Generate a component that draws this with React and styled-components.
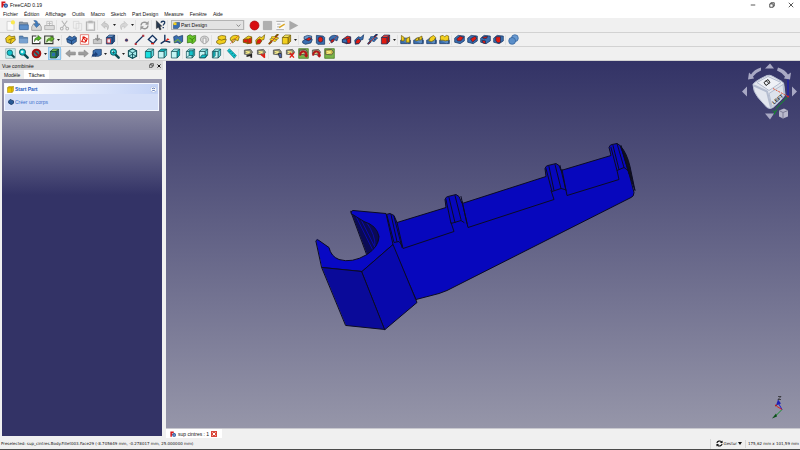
import React from 'react'
import styled, { createGlobalStyle, css } from 'styled-components'

//=============//
// GlobalStyle //
//=============//
const GlobalStyle = createGlobalStyle`
  * { box-sizing: border-box; }
  body {
    margin: 0;
    font-family: "Liberation Sans", Arial, sans-serif;
    font-size: 5px;
    line-height: 8px;
    color: #111;
    background: #f0f0f0;
  }
  button, select {
    font: inherit;
    color: inherit;
    margin: 0;
    padding: 0;
    border: 0;
    background: none;
  }
  svg { display: block; flex: none; }
`

//=======//
// Icons //
//=======//
const CYAN = '#12c4cc'
const TEAL = '#0a4a52'
const NAVY = '#12305c'
const BLUE = '#3a6fb0'
const RED = '#e01b10'
const YELLOW = '#f2cf1d'
const OLIVE = '#6d5a08'
const GREY = '#b4b4b4'

const Svg = ({ size = 11, children }) => (
  <svg width={size} height={size} viewBox="0 0 16 16" fill="none" aria-hidden="true">
    {children}
  </svg>
)

const Box = ({ top, front, side, line }) => (
  <g stroke={line} strokeLinejoin="round">
    <path d="M2 5l4-3.500h8l-3.500 3.500z" fill={top} />
    <path d="M2 5h8.500v9.500H2z" fill={front} />
    <path d="M10.500 5L14 1.500v9l-3.500 4z" fill={side} />
  </g>
)

const ViewBoxIcon = ({ face }) => (
  <Svg>
    <Box
      line={TEAL}
      top={face === 'top' ? '#0fb3bd' : '#a6f0f0'}
      front={face === 'front' ? '#19dede' : '#c4f4f4'}
      side={face === 'side' ? '#0fb3bd' : '#5fd9dc'}
    />
    {face === 'back' && <path d="M6 4h6v7H6zM2 14l4-3" fill={CYAN} stroke={TEAL} />}
    {face === 'bottom' && <path d="M3 14l3-4h7l-3 4z" fill={CYAN} stroke={TEAL} />}
    {face === 'left' && <path d="M3 6l3-2v7l-3 3z" fill={CYAN} stroke={TEAL} />}
  </Svg>
)

const Lens = ({ children }) => (
  <Svg>
    <path d="M9.500 9.500L14 14" stroke={TEAL} strokeWidth="3.500" strokeLinecap="round" />
    <circle cx="6.500" cy="6" r="4.500" fill={CYAN} stroke={TEAL} strokeWidth="1.200" />
    <circle cx="6" cy="5.500" r="2" fill="#d9fbfb" />
    {children}
  </Svg>
)

const Measure = ({ mark, frame }) => (
  <Svg>
    {frame && <path d="M1 1h14v14H1z" fill="#7ab54a" stroke="#3d7018" />}
    <path d="M2 3l9-1 3 4-3 4-9-1z" fill={mark === 'eye' ? '#c9b94a' : '#8c8c72'} stroke="#444" />
    <path d="M4 5l6 1M4 8l5-1" stroke="#fff38a" strokeWidth="1.500" />
    {mark === 'cross' && <path d="M7 7l6 7M13 7l-6 7" stroke={RED} strokeWidth="2" />}
    {mark === 'arc' && <path d="M3 11c1-8 9-8 10 1M10 10l3 3" stroke="#b3151a" strokeWidth="3" />}
    {mark === 'angle' && <path d="M7 9l6 5M12 8v6" stroke={RED} strokeWidth="2.500" />}
    {mark === 'line' && <path d="M5 12l7-2v4" stroke="#222" strokeWidth="2.500" />}
    {mark === 'dim' && <path d="M9 8h5v6h-3z" fill="#4c66a8" stroke="#222" />}
  </Svg>
)

// additive tools are yellow, subtractive ones are blue
const tones = {
  add: { main: YELLOW, line: OLIVE },
  sub: { main: BLUE, line: NAVY },
}

const Solid = ({ tone, kind }) => {
  const { main, line } = tones[tone]
  return (
    <Svg>
      {kind === 'pad' && (
        <g stroke={line} strokeLinejoin="round">
          <path d="M1 10l5-3 9 1-2 5-8 2-4-2z" fill={main} />
          <path d="M3 4l5-2 6 1v4l-6 2-5-2z" fill={tone === 'add' ? main : '#6e9bd1'} />
          {tone === 'sub' && <path d="M5 8l5-3 4 1-4 4z" fill={RED} />}
        </g>
      )}
      {kind === 'revolve' && (
        <g stroke={line}>
          <path d="M2 6c3-5 9-5 13-2l-2 6-4-2-3 4-4-3z" fill={main} />
          <path d="M4 9l4-2 1 3-4 3z" fill={tone === 'add' ? '#fff07a' : RED} />
          <path d="M2 14L14 2" stroke={RED} strokeDasharray="2 1" />
        </g>
      )}
      {kind === 'hole' && (
        <g stroke={line}>
          <path d="M2 2l10 1 2 2v10H4l-2-2z" fill={main} />
          <ellipse cx="8" cy="8" rx="3.500" ry="4" fill={RED} />
        </g>
      )}
      {kind === 'loft' && (
        <g stroke={line}>
          <path d="M2 8l7-5 5 1v9l-6 1-6-2z" fill={tone === 'add' ? main : RED} />
          <path d="M8 8l6-3v8l-6 1z" fill={RED} />
          <path d="M2 8l6-1 1 6-7-1z" fill={tone === 'add' ? RED : main} />
        </g>
      )}
      {kind === 'pipe' && (
        <g stroke={line}>
          <path d="M1 9l5-5 4 1 4-4-1 7-4 1-2 5-5 1z" fill={main} />
          <path d="M3 9l4-2 3 3-3 4-5 0z" fill={RED} />
        </g>
      )}
      {kind === 'helix' && (
        <g strokeLinecap="round">
          <path d="M2 14l3-3M4 8c4-2 5 4 7 1M6 5c4-2 5 4 8 1M11 4l3-3" stroke={line} strokeWidth="3" />
          <path d="M4 8c4-2 5 4 7 1M6 5c4-2 5 4 8 1" stroke={main} strokeWidth="2" />
          <path d="M2 14L14 2" stroke={RED} />
        </g>
      )}
      {kind === 'box' && (
        <Box
          top={tone === 'add' ? '#fff06a' : '#f0453a'}
          front={tone === 'add' ? main : RED}
          side={tone === 'add' ? '#c79f0c' : '#a80d08'}
          line={line}
        />
      )}
    </Svg>
  )
}

const Pattern = ({ kind }) => (
  <Svg>
    <path d="M1 9h14v5H1z" fill={BLUE} stroke={NAVY} />
    <path d="M2 9l3-3h9v6l-2 2" fill="#5b8cc4" stroke={NAVY} />
    {kind === 'mirror' && <path d="M2 2l4 3v5H2zM14 4l-5 3v5h5z" fill={YELLOW} stroke={OLIVE} />}
    {kind === 'linear' && <path d="M4 7l4-2v4l-4 1zM9 5l4-2v5l-4 1z" fill={YELLOW} stroke={OLIVE} />}
    {kind === 'polar' && <path d="M4 10l2-5 5-3 3 3-2 4-4 2z" fill={YELLOW} stroke={OLIVE} />}
    {kind === 'multi' && <path d="M2 3l4-1 2 2 3-2 3 1v6l-5 1-3-1-4 0z" fill={YELLOW} stroke={OLIVE} />}
  </Svg>
)

const Dress = ({ kind }) => (
  <Svg>
    <g stroke={NAVY} strokeLinejoin="round">
      <path d="M1 6l5-4 9 1v7l-6 4-8-2z" fill={BLUE} />
      {kind === 'fillet' && <path d="M4 7l5-4 5 2-4 5H5z" fill={RED} />}
      {kind === 'chamfer' && <path d="M5 7l7-4 2 4-6 5z" fill={RED} />}
      {kind === 'draft' && <path d="M3 5l8-2-1 3-4 1zM3 9l5 1v4l-4-1z" fill={RED} />}
      {kind === 'thickness' && <path d="M4 4h7v8l-4 1-3-3z" fill={RED} />}
    </g>
  </Svg>
)

const icons = {
  new: (
    <Svg>
      <path d="M3 2h10v13H3z" fill="#fafafa" stroke="#c8c8c8" />
      <circle cx="11.500" cy="3.500" r="3" fill="#fbe94e" />
    </Svg>
  ),
  open: (
    <Svg>
      <path d="M2 3h5l1 1h6v9H2z" fill="#8f9ba8" stroke="#5f6d7c" />
      <path d="M2 7h13v7H2z" fill="#5c8fca" stroke="#34659f" />
    </Svg>
  ),
  save: (
    <Svg>
      <path d="M1 10l3-5h8l3 5v5H1z" fill="#d6d6d6" stroke="#8a8a8a" />
      <path d="M4 1c4-1 6 1 6 5h3l-5 5-4-5h3c0-2-1-4-3-5z" fill="#3f7dc0" stroke="#27548a" strokeWidth=".7" />
    </Svg>
  ),
  print: (
    <Svg>
      <path d="M4 2h8v6H4z" fill="#f3f3f3" stroke={GREY} />
      <path d="M1 8h14v6H1z" fill="#dcdcdc" stroke="#a2a2a2" />
      <path d="M5 5h6M8 3v5" stroke="#aaa" />
    </Svg>
  ),
  cut: (
    <Svg>
      <path d="M4 1l7 10M12 1L5 11" stroke={GREY} strokeWidth="1.500" />
      <circle cx="4" cy="12.500" r="2" stroke={GREY} strokeWidth="1.500" />
      <circle cx="12" cy="12.500" r="2" stroke={GREY} strokeWidth="1.500" />
    </Svg>
  ),
  copy: (
    <Svg>
      <path d="M2 2h8v10H2zM6 5h8v10H6z" fill="#f0f0f0" stroke="#d4d4d4" />
    </Svg>
  ),
  paste: (
    <Svg>
      <path d="M2 3h12v12H2z" fill="#dedede" stroke="#b0b0b0" strokeWidth="1.500" />
      <path d="M5 6h7v7H5z" fill="#f6f6f6" />
      <path d="M5 1h6v3H5z" fill={GREY} />
    </Svg>
  ),
  undo: <Svg><path d="M2 7l5-5v3c5 0 7 4 4 9 0-4-1-5-4-5v3z" fill="#cfcfcf" stroke={GREY} /></Svg>,
  redo: <Svg><path d="M14 7L9 2v3c-5 0-7 4-4 9 0-4 1-5 4-5v3z" fill="#d6d6d6" stroke="#c0c0c0" /></Svg>,
  refresh: (
    <Svg>
      <path d="M3 8c0-5 6-6 9-3M13 8c0 5-6 6-9 3" stroke="#979797" strokeWidth="2" />
      <path d="M14 1v6H9zM2 15V9h5z" fill="#979797" />
    </Svg>
  ),
  help: (
    <Svg>
      <path d="M2 1l8 8-3 .500 2 4-2 1-2-4-3 2z" fill="#26384f" stroke="#111" strokeWidth=".6" />
      <path d="M9 4c0-3 6-3 5 0 0 2-2 2-2 4M12 10v2" stroke="#1f3c63" strokeWidth="2" />
    </Svg>
  ),
  record: <Svg><circle cx="8" cy="8" r="6.500" fill="#d80d12" stroke="#a5080c" /></Svg>,
  stop: <Svg><path d="M2 2h12v12H2z" fill="#b0b0b0" stroke="#a0a0a0" /></Svg>,
  edit: (
    <Svg>
      <path d="M2 2h12v12H2z" fill="#fafafa" />
      <path d="M2 2h12M3 6h5M3 10h4M2 14h11" stroke="#8a8a8a" />
      <path d="M6 11l8-5" stroke="#d9a520" strokeWidth="2" />
    </Svg>
  ),
  play: <Svg><path d="M2 1l13 7-13 7z" fill="#a9a9a9" /></Svg>,
  part: (
    <Svg>
      <path d="M1 6l5-4 4 2 4-1 1 6-6 5-7-2z" fill={YELLOW} stroke={OLIVE} />
      <path d="M5 9l4-2 5-1M9 7L8 13" stroke={OLIVE} />
    </Svg>
  ),
  group: (
    <Svg>
      <path d="M2 3h5l1 2h6v8H2z" fill="#5e87b8" stroke="#3c638f" />
      <path d="M2 7h12v6H2z" fill="#79a2d0" />
    </Svg>
  ),
  link: (
    <Svg>
      <path d="M8 3H2v11h11v-3" fill="#fff" stroke="#333" strokeWidth="1.500" />
      <path d="M5 11c0-5 2-6 5-6V2l5 4-5 4V8c-2 0-4 0-5 3z" fill="#54b722" stroke="#1f5707" strokeWidth=".8" />
    </Svg>
  ),
  linkGroup: (
    <Svg>
      <path d="M1 3h12v11H1z" fill="#e4f3d4" stroke="#333" strokeWidth="1.500" />
      <path d="M4 12c0-5 2-6 6-6V3l5 4-5 4V9c-3 0-5 0-6 3z" fill="#68b52c" stroke="#1f5707" strokeWidth=".8" />
    </Svg>
  ),
  body: (
    <Svg>
      <path d="M1 7l4-4 4 2 3-2 3 2v6l-6 4-7-3z" fill={BLUE} stroke={NAVY} />
      <path d="M1 7l7 3 7-4M8 10v5" stroke={NAVY} />
    </Svg>
  ),
  sketch: (
    <Svg>
      <path d="M2 1h12v14H2z" fill="#fff" stroke="#db5248" />
      <path d="M4 11l3-7 5 3-3 5zM5 4l6 7" stroke={RED} strokeWidth="1.500" />
    </Svg>
  ),
  mapSketch: (
    <Svg>
      <path d="M2 8h12v6H2z" fill="#c9c9c9" stroke="#8d8d8d" />
      <path d="M8 1v8M5 6l3 3 3-3" stroke="#8d8d8d" strokeWidth="2" />
    </Svg>
  ),
  attach: (
    <Svg>
      <Box top="#6c99cf" front={BLUE} side="#23508c" line={NAVY} />
      <path d="M3 7h5v6H3z" fill="#e8e8f5" stroke={RED} />
    </Svg>
  ),
  point: <Svg><circle cx="8" cy="9" r="2" fill="#27407c" stroke="#a51b1b" strokeWidth=".5" /></Svg>,
  line: (
    <Svg>
      <path d="M2 14L14 2" stroke={NAVY} strokeWidth="2" />
      <path d="M1 13h3v3H1zM12 1h3v3h-3z" fill="#b3303a" />
    </Svg>
  ),
  plane: (
    <Svg>
      <path d="M8 2l6 6-5 6-7-6z" fill="#eef3fb" stroke={NAVY} strokeWidth="2" />
      <path d="M6 13h4v2H6z" fill={RED} />
    </Svg>
  ),
  axes: (
    <Svg>
      <path d="M7 1v9l-6 4M7 10l8 2" stroke={NAVY} strokeWidth="2" />
      <path d="M11 6l3 2-7 3z" fill={RED} />
    </Svg>
  ),
  shapeBinder: (
    <Svg>
      <path d="M1 4l4-2 3 2 6-2v9l-4 3-4-2-4 1z" fill={BLUE} stroke={NAVY} />
      <path d="M2 12l5-4 5 5" stroke="#6fae3a" strokeWidth="1.500" />
    </Svg>
  ),
  subBinder: (
    <Svg>
      <path d="M2 3l4-2 3 2 5-1v8l-4 4-4-2-4 1z" fill="#69c52a" stroke="#2c6b0b" />
      <path d="M5 6l4 2 4-3M9 8v4" stroke="#2c6b0b" />
    </Svg>
  ),
  clone: (
    <Svg>
      <path d="M2 9c-1-8 13-8 12 0l-2 3H4z" fill="#d5d5d5" stroke="#949494" />
      <path d="M6 6h4v8H6z" fill="#f4f4f4" stroke="#949494" />
    </Svg>
  ),
  fitAll: (
    <Svg>
      <path d="M1 1h14v14H1z" fill="#c6f0f0" stroke="#8fa5a8" />
      <path d="M9 9l5 5" stroke={TEAL} strokeWidth="3" />
      <circle cx="7" cy="7" r="4" fill={CYAN} stroke={TEAL} />
    </Svg>
  ),
  fitSelection: <Lens />,
  drawStyle: (
    <Svg>
      <circle cx="8" cy="8" r="5.500" fill="#2e7d88" stroke="#a51212" strokeWidth="3" />
      <path d="M4 4l8 8" stroke="#a51212" strokeWidth="2.500" />
    </Svg>
  ),
  selBox: (
    <Svg>
      <Box top="#7cc252" front="#2f8f4a" side="#1c5a6a" line="#12402a" />
      <path d="M4 7h5v5H4z" fill="#2b6dad" />
    </Svg>
  ),
  back: <Svg><path d="M1 8l6-5v3h8v4H7v3z" fill="#9c9c9c" stroke="#888" /></Svg>,
  forward: <Svg><path d="M15 8L9 3v3H1v4h8v3z" fill="#9c9c9c" stroke="#888" /></Svg>,
  linkNav: (
    <Svg>
      <path d="M3 4l4-2h8v8l-4 2H3z" fill={BLUE} stroke={NAVY} />
      <path d="M1 14c0-5 2-6 5-6V5l4 4-4 4v-2c-2 0-4 1-5 3z" fill="#1c3f78" />
    </Svg>
  ),
  zoom: <Lens><path d="M6.500 4v5M4 6.500h5" stroke={TEAL} /></Lens>,
  iso: (
    <Svg>
      <path d="M8 1l6 3v8l-6 3-6-3V4z" fill="#a6ecec" stroke={TEAL} strokeWidth="1.500" />
      <path d="M2 4l6 3 6-3M8 7v8M2 12l6-3 6 3" stroke={TEAL} strokeWidth="1.200" />
    </Svg>
  ),
  ruler: (
    <Svg>
      <path d="M2 4l3-3 10 10-3 4z" fill={CYAN} stroke="#0b7f8b" />
      <path d="M5 6l2-2M8 9l2-2M11 12l2-2" stroke={TEAL} />
    </Svg>
  ),
  boolean: (
    <Svg>
      <circle cx="10" cy="6" r="5" fill="#6a9bd1" stroke="#2e5f99" />
      <circle cx="6" cy="10" r="5" fill="#5b8fc9" stroke="#2e5f99" />
    </Svg>
  ),
  task: (
    <Svg size={7}>
      <path d="M1 4l3-3h11v10l-3 4H1z" fill="#ecc500" stroke="#8f7600" />
      <path d="M1 4h10v10M11 4l4-3" stroke="#8f7600" />
    </Svg>
  ),
}

const Logo = ({ size = 7 }) => (
  <Svg size={size}>
    <path d="M1 1h9v4H5v2h4v3H5v5H1z" fill="#d3191c" />
    <circle cx="11" cy="10.500" r="3.500" stroke="#2c5fa8" strokeWidth="3" />
    <path d="M11 5v11M6 10.500h10" stroke="#2c5fa8" />
  </Svg>
)

//==========//
// TitleBar //
//==========//
const TitleBar = styled.header`
  display: flex;
  align-items: center;
  gap: 2px;
  height: 9px;
  padding-left: 1px;
  background: #fff;
`

const WindowButtons = styled.div`
  display: flex;
  margin-left: auto;
`

const WindowButton = styled.button`
  display: flex;
  align-items: center;
  justify-content: center;
  width: 19px;
  height: 9px;
`

const MenuBar = styled.nav`
  display: flex;
  gap: 6px;
  height: 9px;
  padding-left: 3px;
  background: #fff;
`

const MenuItem = styled.a`
  line-height: 10px;
  color: inherit;
  text-decoration: none;
  white-space: nowrap;
`

const menus = ['Fichier', 'Édition', 'Affichage', 'Outils', 'Macro', 'Sketch', 'Part Design', 'Measure', 'Fenêtre', 'Aide']

const Header = () => (
  <>
    <TitleBar>
      <Logo />
      <span>FreeCAD 0.19</span>
      <WindowButtons>
        <WindowButton aria-label="Réduire">
          <Svg size={6}><path d="M2 8h12" stroke="#222" strokeWidth="2" /></Svg>
        </WindowButton>
        <WindowButton aria-label="Restaurer">
          <Svg size={6}><path d="M2 5h9v9H2zM5 5V2h9v9h-3" stroke="#222" strokeWidth="2" /></Svg>
        </WindowButton>
        <WindowButton aria-label="Fermer">
          <Svg size={6}><path d="M2 2l12 12M14 2L2 14" stroke="#222" strokeWidth="2" /></Svg>
        </WindowButton>
      </WindowButtons>
    </TitleBar>
    <MenuBar>
      {menus.map(name => <MenuItem key={name} href="#">{name}</MenuItem>)}
    </MenuBar>
  </>
)

//==========//
// Toolbars //
//==========//
const Toolbar = styled.div`
  display: flex;
  align-items: center;
  height: ${p => (p.$tall ? 15 : 14)}px;
  padding-left: 4px;
  background: #f0f0f0;
  border-bottom: 1px solid #d2d2d2;
`

const ToolButton = styled.button`
  display: flex;
  align-items: center;
  justify-content: center;
  width: 13px;
  height: 13px;
  ${p => p.$active && css`
    background: #b9dcf3;
    box-shadow: inset 0 0 0 1px #8cc4ec;
  `}
`

const DropButton = styled.button`
  display: flex;
  align-items: center;
  justify-content: center;
  width: 5px;
  height: 13px;
`

const Separator = styled.span`
  width: ${p => p.$width}px;
  height: 10px;
  border-left: 1px solid #e2e2e2;
`

const Workbench = styled.label`
  display: flex;
  align-items: center;
  gap: 1px;
  width: 73px;
  height: 10px;
  padding: 0 2px 0 1px;
  background: #e3e3e3;
  border: 1px solid #b4b4b4;
`

const WorkbenchSelect = styled.select`
  flex: 1;
  min-width: 0;
  height: 8px;
  appearance: none;
`

const Tool = ({ icon, label, active }) => (
  <ToolButton aria-label={label} $active={active}>{icon}</ToolButton>
)

const Drop = ({ label }) => (
  <DropButton aria-label={label}>
    <svg width="3" height="2" viewBox="0 0 3 2" aria-hidden="true"><path d="M0 0h3L1.500 2z" fill="#222" /></svg>
  </DropButton>
)

const FileTools = () => (
  <Toolbar $tall role="toolbar">
    <Tool label="Nouveau" icon={icons.new} />
    <Tool label="Ouvrir" icon={icons.open} />
    <Tool label="Enregistrer" icon={icons.save} />
    <Tool label="Imprimer" icon={icons.print} />
    <Separator $width={2} />
    <Tool label="Couper" icon={icons.cut} />
    <Tool label="Copier" icon={icons.copy} />
    <Tool label="Coller" icon={icons.paste} />
    <Separator $width={2} />
    <Tool label="Annuler" icon={icons.undo} />
    <Drop label="Historique d'annulation" />
    <Tool label="Rétablir" icon={icons.redo} />
    <Drop label="Historique de rétablissement" />
    <Separator $width={3} />
    <Tool label="Rafraîchir" icon={icons.refresh} />
    <Separator $width={3} />
    <Tool label="Qu'est-ce que c'est ?" icon={icons.help} />
    <Separator $width={4} />
    <Workbench>
      <Svg size={7}>
        <path d="M1 5l4-4h10v9l-4 5H1z" fill={BLUE} stroke={NAVY} />
        <path d="M1 1h7v6H1z" fill={YELLOW} />
      </Svg>
      <WorkbenchSelect aria-label="Atelier">
        <option>Part Design</option>
      </WorkbenchSelect>
      <Svg size={5}><path d="M2 5l6 6 6-6" stroke="#555" strokeWidth="2" /></Svg>
    </Workbench>
    <Separator $width={4} />
    <Tool label="Enregistrer la macro" icon={icons.record} />
    <Tool label="Arrêter" icon={icons.stop} />
    <Tool label="Macros" icon={icons.edit} />
    <Tool label="Exécuter" icon={icons.play} />
  </Toolbar>
)

const PartTools = () => (
  <Toolbar role="toolbar">
    <Tool label="Créer une pièce" icon={icons.part} />
    <Tool label="Créer un groupe" icon={icons.group} />
    <Tool label="Créer un lien" icon={icons.link} />
    <Tool label="Lier un groupe" icon={icons.linkGroup} />
    <Drop label="Types de lien" />
    <Separator $width={4} />
    <Tool label="Corps" icon={icons.body} />
    <Tool label="Esquisse" icon={icons.sketch} />
    <Tool label="Éditer l'esquisse" icon={icons.mapSketch} />
    <Tool label="Appliquer l'esquisse" icon={icons.attach} />
    <Separator $width={3} />
    <Tool label="Point" icon={icons.point} />
    <Tool label="Ligne" icon={icons.line} />
    <Tool label="Plan" icon={icons.plane} />
    <Tool label="Repère" icon={icons.axes} />
    <Tool label="Forme liée" icon={icons.shapeBinder} />
    <Tool label="Sous-forme liée" icon={icons.subBinder} />
    <Tool label="Clone" icon={icons.clone} />
    <Separator $width={4} />
    <Tool label="Protrusion" icon={<Solid tone="add" kind="pad" />} />
    <Tool label="Révolution" icon={<Solid tone="add" kind="revolve" />} />
    <Tool label="Lissage additif" icon={<Solid tone="add" kind="loft" />} />
    <Tool label="Balayage additif" icon={<Solid tone="add" kind="pipe" />} />
    <Tool label="Hélice additive" icon={<Solid tone="add" kind="helix" />} />
    <Tool label="Primitive additive" icon={<Solid tone="add" kind="box" />} />
    <Drop label="Primitives additives" />
    <Separator $width={3} />
    <Tool label="Cavité" icon={<Solid tone="sub" kind="pad" />} />
    <Tool label="Perçage" icon={<Solid tone="sub" kind="hole" />} />
    <Tool label="Rainure" icon={<Solid tone="sub" kind="revolve" />} />
    <Tool label="Lissage soustractif" icon={<Solid tone="sub" kind="loft" />} />
    <Tool label="Balayage soustractif" icon={<Solid tone="sub" kind="pipe" />} />
    <Tool label="Hélice soustractive" icon={<Solid tone="sub" kind="helix" />} />
    <Tool label="Primitive soustractive" icon={<Solid tone="sub" kind="box" />} />
    <Drop label="Primitives soustractives" />
    <Separator $width={2} />
    <Tool label="Symétrie" icon={<Pattern kind="mirror" />} />
    <Tool label="Répétition linéaire" icon={<Pattern kind="linear" />} />
    <Tool label="Répétition circulaire" icon={<Pattern kind="polar" />} />
    <Tool label="Transformation multiple" icon={<Pattern kind="multi" />} />
    <Separator $width={2} />
    <Tool label="Congé" icon={<Dress kind="fillet" />} />
    <Tool label="Chanfrein" icon={<Dress kind="chamfer" />} />
    <Tool label="Dépouille" icon={<Dress kind="draft" />} />
    <Tool label="Coque" icon={<Dress kind="thickness" />} />
    <Separator $width={2} />
    <Tool label="Opération booléenne" icon={icons.boolean} />
  </Toolbar>
)

const ViewTools = () => (
  <Toolbar role="toolbar">
    <Tool label="Tout afficher" icon={icons.fitAll} />
    <Tool label="Afficher la sélection" icon={icons.fitSelection} />
    <Tool label="Style de tracé" icon={icons.drawStyle} />
    <Drop label="Styles de tracé" />
    <Tool label="Boîte de sélection" icon={icons.selBox} active />
    <Separator $width={3} />
    <Tool label="Précédent" icon={icons.back} />
    <Tool label="Suivant" icon={icons.forward} />
    <Tool label="Aller à l'objet lié" icon={icons.linkNav} />
    <Drop label="Navigation des liens" />
    <Tool label="Zoom" icon={icons.zoom} />
    <Drop label="Options de zoom" />
    <Tool label="Isométrique" icon={icons.iso} />
    <Separator $width={4} />
    <Tool label="Face" icon={<ViewBoxIcon face="front" />} />
    <Tool label="Dessus" icon={<ViewBoxIcon face="top" />} />
    <Tool label="Droite" icon={<ViewBoxIcon face="side" />} />
    <Separator $width={2} />
    <Tool label="Arrière" icon={<ViewBoxIcon face="back" />} />
    <Tool label="Dessous" icon={<ViewBoxIcon face="bottom" />} />
    <Tool label="Gauche" icon={<ViewBoxIcon face="left" />} />
    <Separator $width={2} />
    <Tool label="Mesurer une distance" icon={icons.ruler} />
    <Separator $width={4} />
    <Tool label="Mesure linéaire" icon={<Measure mark="line" />} />
    <Tool label="Mesure angulaire" icon={<Measure mark="angle" />} />
    <Separator $width={3} />
    <Tool label="Actualiser les mesures" icon={<Measure mark="dim" />} />
    <Tool label="Effacer les mesures" icon={<Measure mark="cross" />} />
    <Tool label="Afficher les mesures" icon={<Measure mark="arc" frame />} />
    <Tool label="Afficher en 3D" icon={<Measure mark="arc" />} />
    <Tool label="Afficher les écarts" icon={<Measure mark="eye" frame />} />
  </Toolbar>
)

//===========//
// SidePanel //
//===========//
const Panel = styled.aside`
  display: flex;
  flex-direction: column;
  flex: none;
  width: 163px;
`

const PanelTitle = styled.div`
  display: flex;
  align-items: center;
  gap: 2px;
  height: 9px;
  padding: 0 1px 0 2px;
  background: #dcdcdc;
`

const PanelButton = styled.button`
  display: flex;
  align-items: center;
  justify-content: center;
  width: 6px;
  height: 8px;
  &:first-of-type { margin-left: auto; }
`

const Tabs = styled.div`
  display: flex;
  align-items: flex-end;
  height: 9px;
`

const Tab = styled.button`
  height: ${p => (p.$active ? 9 : 8)}px;
  padding: 0 4px;
  background: ${p => (p.$active ? '#fff' : '#ececec')};
`

const TaskArea = styled.div`
  flex: 1;
  margin: 0 1px 2px 2px;
  padding: 4px 3px 4px 2px;
  background: linear-gradient(#9797ae, #8a8aa3 30px, #333366 116px);
`

const TaskBox = styled.section`
  border: 1px solid #f4f7ff;
  background: #d5dff8;
`

const TaskHeader = styled.div`
  display: flex;
  align-items: center;
  gap: 1px;
  height: 10px;
  padding: 0 1px 0 2px;
  font-weight: bold;
  color: #1f5cc0;
  background: linear-gradient(90deg, #fff, #c5d4f7);
`

const CollapseButton = styled.button`
  display: flex;
  margin-left: auto;
`

const TaskLink = styled.a`
  display: flex;
  align-items: center;
  gap: 1px;
  height: 16px;
  padding-left: 3px;
  color: #3a6fcb;
  text-decoration: none;
`

const SidePanel = () => (
  <Panel>
    <PanelTitle>
      <span>Vue combinée</span>
      <PanelButton aria-label="Détacher">
        <Svg size={5}><path d="M1 6h9v8H1zM5 6V2h9v8h-4" stroke="#222" strokeWidth="2" /></Svg>
      </PanelButton>
      <PanelButton aria-label="Fermer le panneau">
        <Svg size={4}><path d="M2 2l12 12M14 2L2 14" stroke="#111" strokeWidth="4" /></Svg>
      </PanelButton>
    </PanelTitle>
    <Tabs role="tablist">
      <Tab role="tab" aria-selected="false">Modèle</Tab>
      <Tab role="tab" aria-selected="true" $active>Tâches</Tab>
    </Tabs>
    <TaskArea>
      <TaskBox>
        <TaskHeader>
          {icons.task}
          <span>Start Part</span>
          <CollapseButton aria-label="Replier">
            <Svg size={7}>
              <circle cx="8" cy="8" r="7" fill="#fff" stroke="#9bb0dc" />
              <path d="M5 7l3-3 3 3M5 12l3-3 3 3" stroke="#23479b" strokeWidth="2" />
            </Svg>
          </CollapseButton>
        </TaskHeader>
        <TaskLink href="#">
          <Svg size={6}>
            <path d="M1 6l5-5 4 2 5 2v6l-6 4-7-4z" fill="#285a96" stroke="#12305c" strokeWidth="2" />
          </Svg>
          <span>Créer un corps</span>
        </TaskLink>
      </TaskBox>
    </TaskArea>
  </Panel>
)

//==========//
// Viewport //
//==========//
const Workspace = styled.main`
  display: flex;
  flex: 1;
  gap: 3px;
  min-height: 0;
`

const Document = styled.div`
  display: flex;
  flex-direction: column;
  flex: 1;
  min-width: 0;
`

const Viewport = styled.div`
  display: flex;
  flex: 1;
  min-height: 0;
  background: linear-gradient(#333366, #9696a9);
`

const Scene = styled.svg`
  width: 100%;
  height: 100%;
`

const Model = () => (
  <g stroke="#0b0b24" strokeWidth="1" strokeLinejoin="round" strokeLinecap="round">
    <path
      d="M386 214l4-1 4 2 3 7 49-15-1-8q1-3 3-3l8-2 3 2 3 7 84-27-1-8q1-3 3-3l8-2 3 2 2 5 50-15-2-8q1-3 3-3l5-1 3 2q7 16 8 24l6 23q0 4-3 5L447 290l-8 3-23 6-24-55z"
      fill="#0707bd"
    />
    <path d="M621 146q6 7 9 20l5 24-7-20z" fill="#111119" />
    <g fill="none">
      <path d="M397 222l6 26 51-17-3-9M462 201l6 26 86-28-3-9M562 169l5 26 52-16-2-9" />
      <path d="M446 199l5 24 10-3 3 2M449 197l6 25M455 195l6 24M461 196l6 27" />
      <path d="M546 168l6 23 9-3 4 1M549 166l5 24M555 164l6 24M560 165l6 25" />
      <path d="M611 147l6 23 7-3 4 3M613 145l6 24M617 143l7 24M621 145l8 28" />
      <path d="M387 215l7 27 5-1 3 4M391 214l6 27M394 216l8 31" />
    </g>
    <path d="M351 211l14 10q13 3 14 16-2 12-12 17z" fill="#0a0a55" />
    <path d="M356 216l17 34M361 219l14 28M366 221q10 14 9 25" fill="none" stroke="#0909a8" />
    <path
      d="M316 240q1-2 3 0l10 7q2 9 10 12 13 4 28-5 12-8 12-18-2-11-15-15l-13-8q0-3 2-3l33 3 7 31-31 27-40-4z"
      fill="#0808c4"
    />
    <path d="M322 267l40 4 23 58-39-4z" fill="#0a0a99" />
    <path d="M362 271l31-27 24 58-32 27z" fill="#0808ac" />
  </g>
)

const NavigationCube = () => (
  <g>
    <g fill="#a9a9c4">
      <path d="M765 68h9l-4-5zM765 113h9l-4 6zM747 86v10l-5-5zM792 86v10l5-5z" />
      <path d="M761 67q-7 2-10 7l-2-2-1 7 6-1-1-2q3-4 8-6zM778 67q7 2 10 7l3-2-1 7-6-1 1-2q-3-4-8-6z" />
      <path d="M779 110l5-2 4 2v6l-5 2-4-2z" fill="#b9b9cc" />
      <path d="M779 110l4 2 5-2M783 112v6" stroke="#7c7c96" fill="none" />
    </g>
    <path d="M753 84q1-3 14-9 3-1 6 1l9 5q2 1 2 4l1 9q0 2-12 13-3 2-6 0l-9-10q-5-6-5-13z" fill="#e3e6ee" stroke="#b8bfd2" />
    <path d="M754 85l13 6 4 16" fill="none" stroke="#b4bccf" strokeWidth="2" />
    <path d="M757 82l11-6 13 6-12 8z" fill="#eef0f6" stroke="#b4bccf" />
    <path d="M769 93l14-9 1 10-12 12z" fill="#dde2ec" stroke="#b4bccf" />
    <path d="M764 82l4-3 2 3-4 3zM766 80l3 3" fill="none" stroke="#222" strokeWidth="1" />
    <text x="774" y="104" fontSize="5" fontWeight="bold" fill="#222" transform="rotate(-40 774 104)">LEFT</text>
    <path d="M773 88l15 8" stroke="#e0593c" strokeDasharray="2 1" />
    <path d="M788 96V79" stroke="#1414c8" />
    <path d="M788 96l-12 12" stroke="#0c9c1e" strokeWidth="1" />
    <path d="M773 110l2 2 2-3M775 112l-1 2" stroke="#0c9c1e" fill="none" />
    <circle cx="788" cy="96" r="1" fill="#d42020" />
  </g>
)

const AxisCross = () => (
  <g fill="none">
    <path d="M782 409l-7 7" stroke="#15912b" strokeWidth="1" />
    <path d="M776 413l-4 5 5-2z" fill="#0b4f19" />
    <path d="M782 409l-4-7" stroke="#1d1dcc" strokeWidth="1" />
    <path d="M776 405l2-6 3 4z" fill="#2020b4" />
    <path d="M782 409l-5-3" stroke="#d52222" strokeWidth="1" />
    <circle cx="776" cy="405" r="1" fill="#b51a1a" />
    <path d="M778 396h3l-3 3h3" stroke="#222" strokeWidth=".7" />
  </g>
)

const DocumentTabs = styled.div`
  display: flex;
  height: 10px;
  border-top: 1px solid #c9c9cf;
`

const DocumentTab = styled.div`
  display: flex;
  align-items: center;
  gap: 2px;
  padding: 0 5px 0 4px;
  background: #fff;
`

const CloseTab = styled.button`
  display: flex;
  align-items: center;
  justify-content: center;
  width: 6px;
  height: 6px;
  background: #d9463a;
`

const DocumentView = () => (
  <Document>
    <Viewport>
      <Scene viewBox="166 61 634 366" preserveAspectRatio="xMidYMid meet" role="img">
        <Model />
        <NavigationCube />
        <AxisCross />
      </Scene>
    </Viewport>
    <DocumentTabs>
      <DocumentTab>
        <Logo size={6} />
        <span>sup cintres : 1</span>
        <CloseTab aria-label="Fermer le document">
          <Svg size={4}><path d="M2 2l12 12M14 2L2 14" stroke="#fff" strokeWidth="4" /></Svg>
        </CloseTab>
      </DocumentTab>
    </DocumentTabs>
  </Document>
)

//===========//
// StatusBar //
//===========//
const StatusBar = styled.footer`
  display: flex;
  align-items: center;
  height: 12px;
  font-family: "DejaVu Sans", Verdana, sans-serif;
  font-size: 4px;
  white-space: nowrap;
  background: #f0f0f0;
  border-bottom: 1px solid #4a4a4a;
`

const StatusText = styled.span`
  flex: 1;
  padding-left: 1px;
`

const StatusButton = styled.button`
  display: flex;
  align-items: center;
  gap: 1px;
  height: 10px;
  padding: 0 3px 0 5px;
  border-left: 1px solid #d8d8d8;
`

const StatusSize = styled.span`
  padding: 0 1px 0 2px;
  border-left: 1px solid #d8d8d8;
`

const Footer = () => (
  <StatusBar>
    <StatusText>Preselected: sup_cintres.Body.Fillet003.Face29 (-8.705649 mm, -0.278017 mm, 25.000000 mm)</StatusText>
    <StatusButton>
      <Svg size={7}>
        <path d="M2 7c1-5 7-6 11-3M14 9c-1 5-7 6-11 3" stroke="#111" strokeWidth="2.500" />
        <path d="M15 1v6H9zM1 15V9h6z" fill="#111" />
      </Svg>
      <span>Gestur</span>
      <svg width="4" height="3" viewBox="0 0 4 3" aria-hidden="true"><path d="M0 0h4L2 3z" fill="#111" /></svg>
    </StatusButton>
    <StatusSize>175,62 mm x 101,59 mm</StatusSize>
  </StatusBar>
)

//=====//
// App //
//=====//
const Layout = styled.div`
  display: flex;
  flex-direction: column;
  height: 100vh;
`

const App = () => (
  <Layout>
    <GlobalStyle />
    <Header />
    <FileTools />
    <PartTools />
    <ViewTools />
    <Workspace>
      <SidePanel />
      <DocumentView />
    </Workspace>
    <Footer />
  </Layout>
)

export default App
